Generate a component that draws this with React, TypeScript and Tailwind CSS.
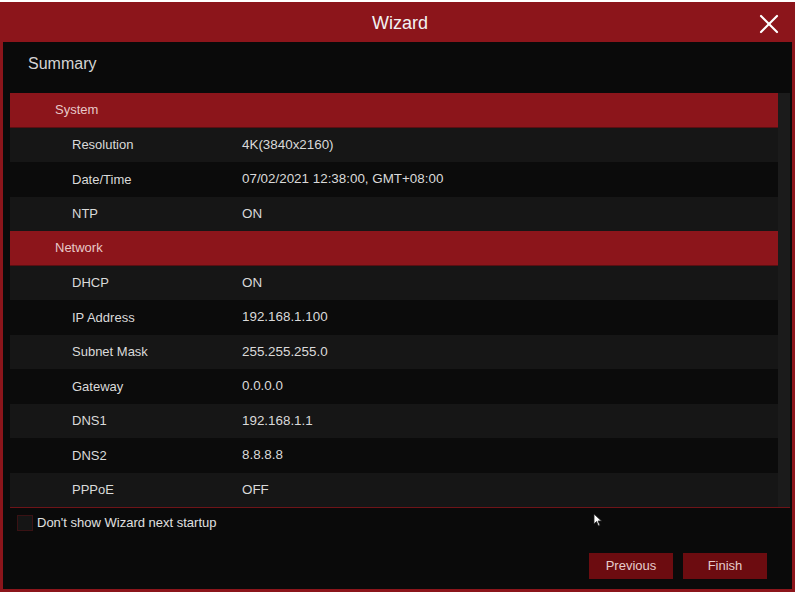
import { X } from 'lucide-react';

type Row = { label: string; value?: string; header?: boolean };

const rows: Row[] = [
  { label: 'System', header: true },
  { label: 'Resolution', value: '4K(3840x2160)' },
  { label: 'Date/Time', value: '07/02/2021 12:38:00, GMT+08:00' },
  { label: 'NTP', value: 'ON' },
  { label: 'Network', header: true },
  { label: 'DHCP', value: 'ON' },
  { label: 'IP Address', value: '192.168.1.100' },
  { label: 'Subnet Mask', value: '255.255.255.0' },
  { label: 'Gateway', value: '0.0.0.0' },
  { label: 'DNS1', value: '192.168.1.1' },
  { label: 'DNS2', value: '8.8.8.8' },
  { label: 'PPPoE', value: 'OFF' },
];

export default function App() {
  let stripe = 0;

  return (
    <div className="w-[798px] h-[595px] bg-white pt-[2px] font-['Liberation_Sans',Arial,sans-serif]">
      <div className="relative w-[795px] h-[590px] bg-[#8c151b] px-[3px] pb-[3px] flex flex-col">
        {/* Title bar */}
        <div className="relative h-[40px] flex items-center justify-center pt-[3px] pl-[5px] text-[18px] text-[#f2f2f2] shrink-0">
          Wizard
          <X className="absolute right-[7px] top-[6px] h-[32px] w-[32px] text-white" strokeWidth={1.6} />
        </div>

        <div className="flex-1 bg-[#0a0a0a] flex flex-col">
          <div className="h-[51px] flex items-center pl-[25px] pb-[8px] text-[16px] text-[#d4d4d4]">
            Summary
          </div>

          {/* Summary table */}
          <div className="ml-[7px] mr-[2px] flex border-b border-[#6e1418]">
            <div className="flex-1">
              {rows.map((row) => {
                if (row.header) {
                  stripe = 0;
                  return (
                    <div
                      key={row.label}
                      className="h-[34.5px] flex items-center pl-[45px] bg-[#8c151b] border-b border-[#5a0f12] text-[13px] text-[#e8c8c8]"
                    >
                      {row.label}
                    </div>
                  );
                }
                const light = stripe++ % 2 === 0;
                return (
                  <div
                    key={row.label}
                    className={`h-[34.5px] flex items-center text-[13px] text-[#dadada] ${
                      light ? 'bg-[#161616]' : 'bg-[#0b0b0b]'
                    }`}
                  >
                    <span className="w-[232px] pl-[62px]">{row.label}</span>
                    <span className="text-[13.4px]">{row.value}</span>
                  </div>
                );
              })}
            </div>
            <div className="w-[12px] bg-[#1b1b1b]" />
          </div>

          <div className="flex-1 flex flex-col">
            <label className="mt-[5px] ml-[14px] flex items-center gap-[4px] text-[13px] text-[#e0e0e0]">
              <span className="w-[16px] h-[16px] bg-[#151515] border border-[#3a1214]" />
              Don't show Wizard next startup
            </label>

            <div className="mt-auto mb-[10px] mr-[25px] flex justify-end gap-[10px]">
              <button className="w-[84px] h-[26px] bg-[#6c0c10] text-[13px] text-[#e6cccc]">Previous</button>
              <button className="w-[84px] h-[26px] bg-[#6c0c10] text-[13px] text-[#e6cccc]">Finish</button>
            </div>
          </div>
        </div>

        {/* mouse pointer */}
        <svg className="absolute left-[593px] top-[511px]" width="10" height="14" viewBox="0 0 10 14">
          <path d="M1 1 L1 11 L3.5 8.5 L5.5 13 L7 12.3 L5 8 L8.5 8 Z" fill="white" stroke="#222" strokeWidth="0.8" />
        </svg>
      </div>
    </div>
  );
}
